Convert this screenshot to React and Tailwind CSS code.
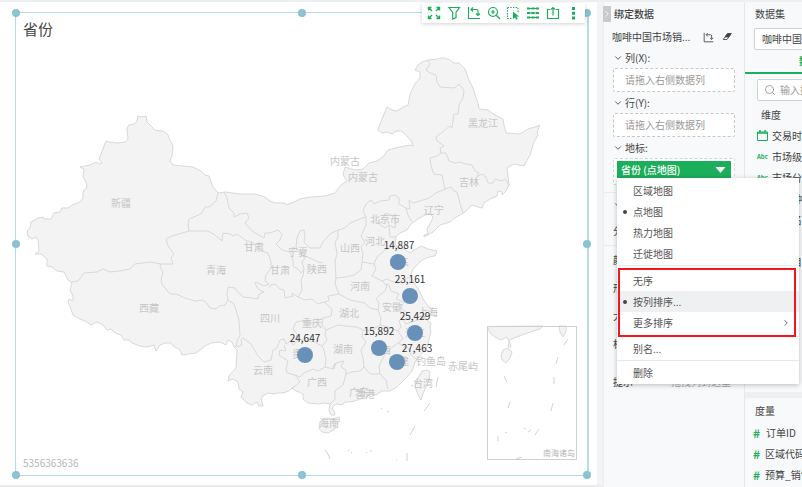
import { useState } from 'react';
import clsx from 'clsx';
import { ChevronDown, ChevronRight, Search } from 'lucide-react';

// Country outline, clockwise from the northern tip of Xinjiang
const OUTLINE =
  'M138 116L141 117 146 116 147 122 151 126 155 130 160 131 163 131 168 135 170 140 173 146 172 156 170 161 173 165 182 166 193 167 201 171 205 175 209 176 213 187 218 193 225 192 240 194 255 194 265 197 270 201 275 203 285 203 286 205 294 202 300 199 310 197 325 196 335 193 341 185 347 181 343 175 345 167 351 169 357 170 363 169 369 163 377 161 383 157 388 150 400 147 410 145 413 146 412 142 407 136 401 131 396 131 392 134 387 132 382 133 378 130 382 119 387 107 392 110 397 111 403 107 408 105 410 94 415 84 420 78 420 72 415 70 418 65 422 62 428 60 438 59 440 58 445 58 450 60 454 63 459 63 465 69 469 80 473 88 475 95 478 103 479 109 488 110 495 115 503 119 504 125 506 133 520 134 528 129 535 127 540 125 537 132 538 135 534 142 530 155 524 166 514 164 507 168 508 176 509 185 506 191 502 195 502 192 498 191 497 196 490 199 484 203 482 208 478 207 472 205 465 212 460 215 456 217 450 222 440 225 433 232 428 235 424 237 424 235 428 234 427 229 431 222 433 217 430 214 425 215 418 219 411 224 407 230 400 233 396 237 395 244 398 248 404 249 410 253 416 249 421 246 428 249 437 251 435 256 429 257 424 259 420 262 413 269 411 275 414 283 420 292 423 299 428 306 432 309 431 315 424 318 431 323 430 328 431 332 429 339 428 345 424 351 420 356 415 362 412 371 407 377 402 382 397 387 390 391 382 391 376 395 371 393 366 398 360 399 355 401 349 402 345 402 342 405 336 404 332 408 334 411 335 415 331 415 329 410 330 404 325 403 318 404 308 403 303 399 303 394 299 392 296 391 292 388 289 391 283 393 278 393 273 394 268 393 263 396 261 399 263 406 259 406 257 402 252 405 247 403 243 399 241 397 243 392 239 389 238 382 233 379 228 381 229 376 236 368 237 350 234 347 232 342 228 340 226 345 220 342 211 343 205 346 196 353 182 355 180 350 173 346 171 343 165 343 160 345 156 351 154 345 147 347 140 346 132 343 129 340 124 340 121 335 115 333 111 329 107 330 103 325 97 322 91 325 85 321 80 319 73 315 71 309 68 302 69 299 73 301 73 296 70 290 72 283 68 280 64 272 57 271 52 267 47 266 47 259 41 254 35 254 39 251 38 240 36 237 32 239 28 236 27 231 30 228 31 222 38 218 43 217 44 219 51 219 54 213 60 212 62 208 68 208 72 205 80 202 83 198 83 192 87 187 86 182 83 177 84 169 80 167 90 165 96 162 100 164 102 163 99 159 106 141 109 142 117 143 125 142 128 139 127 128 129 125 134 124 137 121Z';

const BORDERS = [
  // Xinjiang, Gansu, Qinghai, Tibet
  'M218 193L216 201 209 207 205 207 201 214 189 219 188 225 189 231 172 236 166 239 168 246 174 254 171 258 173 264 161 264 150 262 135 264 130 269 120 271 110 272 103 269 97 272 84 273 78 281 71 282',
  'M189 231L201 231 208 231 215 235 222 241 223 233 230 234 233 236 237 234 245 240 252 242 258 248 262 251 268 253 271 262 271 268 266 275 265 281 269 284 264 286 256 282 255 283 258 289 264 292 259 294 258 299 252 298 243 297 237 291 235 288 228 287 227 294 228 300 225 305 219 306 216 309 210 308 206 302 202 300 195 301 185 298 176 294 170 294 162 284 161 280 163 272 160 267 161 264',
  'M228 300L234 304 236 310 239 320 240 335 237 341 236 347 242 345 241 340 243 338 250 343 254 349 258 356 264 362 271 360 273 350 277 348 280 340 284 339 286 344 291 341 293 345 298 340',
  // Inner Mongolia south side
  'M224 192L227 198 229 208 234 213 234 217 240 214 247 213 249 218 245 223 252 231 257 234 264 238 265 233 270 233 278 230 282 234 280 240 276 244 282 250 290 252 293 260 293 266 298 269 301 273 304 269 302 262 305 258 301 255 296 247 297 238 300 231 304 230 305 236 304 242 310 248 320 248 323 242 330 234 338 230',
  'M290 252L297 247M301 255L310 258 318 262 323 263M304 269L303 276 301 280 302 290 298 297 292 293 293 296 285 298 284 290 280 289 275 284 271 285 269 287',
  'M338 230L345 228 350 223 360 219 366 217 363 211 366 204 371 200 374 204 380 201 389 200 390 196 395 195 399 198 399 204 406 208 410 209 409 200 413 203 420 201 429 198 436 193 445 189',
  'M445 189L442 175 434 174 431 166 430 158 437 156 441 153 440 148 444 146 440 143 437 141 436 137 450 126 452 128 454 114 458 114 459 105 463 98 464 90 459 84 455 88 440 87 437 82 436 75 430 73 426 70 430 64 427 60',
  'M441 153L446 153 449 161 455 163 460 162 466 164 472 165 475 171 479 173 477 177 482 174 486 177 488 183 493 183 495 179 501 181 505 179 509 185M445 189L451 187 454 191 457 192 461 207 463 213',
  // Hebei, Beijing, Tianjin, Shanxi, Shandong
  'M406 208L408 215 412 222M378 220L382 219 386 213 391 215 396 220 395 228 389 225 385 228 379 224ZM389 226L390 237 396 237',
  'M366 217L366 225 361 236 365 242 361 247 363 253 362 262 374 264 377 257 385 250 395 245M338 230L338 237 335 243 337 253 335 262 336 278 345 277 354 275 361 270 362 262',
  'M374 264L376 269 372 276 382 281 387 279 391 281 398 283 404 279 411 277',
  // Henan, Hubei, Anhui, Jiangsu, Shaanxi
  'M336 278L335 284 339 294 350 300 365 303 370 308 378 310 381 318 380 325 370 331 363 330 357 327 345 326 338 325 326 330 322 325 323 318',
  'M339 294L328 296 329 301 324 302 332 309 331 316 323 318 314 323 307 324 302 321 296 322 293 329 297 334 296 339 304 340 315 342 322 346 327 340 325 335 326 330M298 297L305 300 312 299 318 304 324 302',
  'M378 310L379 303 376 299 381 294 385 291 387 286 382 281M385 284L389 285 391 291 399 294 396 299 404 302 401 308 407 313 402 318 406 324 415 321 424 318M402 318L399 321 401 327 398 331 391 328 380 325',
  // Jiangxi, Zhejiang, Fujian, Hunan, Guangdong, Guangxi, Guizhou, Yunnan
  'M363 330L362 337 366 342 361 350 363 358 364 367 370 374 380 374 379 366 384 356 390 349 398 343 403 339 398 331M398 343L408 348 411 355 417 360M380 374L386 380 388 389',
  'M364 367L360 371 352 372 346 374 346 370 341 367 344 361 336 363 334 369 325 367 326 360 324 350 322 346M325 367L318 371 313 369 304 373 300 377 295 375 287 373 286 369 288 361 279 355 280 350 286 351 284 345M346 374L343 385 335 391 335 399 330 404M295 375L300 382 295 386 292 388',
].join('');

const HAINAN = 'M320 422L325 418 332 419 339 417 340 421 336 424 335 429 328 433 322 432 319 429Z';
const TAIWAN = 'M415 386L418 378 422 371 427 370 430 372 429 380 424 391 421 400 418 395Z';
const SEA_DASHES =
  'M438 377L436 387M430 403L424 411M415 426L410 435M407 453V461M325 450L328 454 330 459M381 408L382 409M387 411L389 412M348 450L349 451M351 452L352 453M366 452L367 453M370 451L372 451M396 460L397 460M335 363L333 368M413 385L411 386';

const REGION_LABELS = [
  ['新疆', 121, 203], ['甘肃', 254, 247], ['甘肃', 280, 270], ['青海', 216, 270], ['西藏', 149, 308],
  ['四川', 270, 318], ['重庆', 312, 323], ['云南', 263, 370], ['贵州', 302, 354], ['广西', 317, 382],
  ['宁夏', 298, 252], ['陕西', 317, 269], ['山西', 350, 248], ['河北', 375, 241], ['北京市', 385, 219],
  ['辽宁', 434, 210], ['吉林', 469, 182], ['黑龙江', 483, 123], ['内蒙古', 345, 161],
  ['内蒙古', 363, 177], ['河南', 360, 286], ['湖北', 349, 313], ['湖南', 343, 349], ['安徽', 392, 307],
  ['上海', 428, 312], ['山东', 399, 262], ['浙江', 415, 333], ['江西', 381, 350], ['福建', 399, 361],
  ['广东', 359, 392], ['香港', 365, 394], ['海南', 329, 423], ['台湾', 423, 383], ['钓鱼岛', 431, 361],
  ['赤尾屿', 463, 366],
];

const POINTS = [
  { value: '14,887', x: 398, y: 262, lx: 399, ly: 245 },
  { value: '23,161', x: 410, y: 296, lx: 410, ly: 279 },
  { value: '25,429', x: 415, y: 333, lx: 415, ly: 316 },
  { value: '15,892', x: 379, y: 348, lx: 379, ly: 331 },
  { value: '27,463', x: 397, y: 362, lx: 417, ly: 348 },
  { value: '24,647', x: 305, y: 355, lx: 305, ly: 338 },
];

const HANDLES = [
  '-left-1 -top-1', 'left-1/2 -top-1 -translate-x-1/2', '-right-1 -top-1',
  '-left-1 top-1/2 -translate-y-1/2', '-right-1 top-1/2 -translate-y-1/2',
  '-left-1 -bottom-1', 'left-1/2 -bottom-1 -translate-x-1/2', '-right-1 -bottom-1',
];

const TOOLS = [
  { name: '全屏', icon: <path d="M1.500 4.500v-3h3M1.500 1.500L5 5M9.500 1.500h3v3M12.500 1.500L9 5M1.500 9.500v3h3M1.500 12.500L5 9M12.500 9.500v3h-3M12.500 12.500L9 9" strokeWidth="1.400" /> },
  { name: '筛选', icon: <path d="M2 1.500h10.500L9 6.500v5L5.700 13V6.500z" /> },
  { name: '交换行列', icon: <path d="M1.500 1v11.500H13M4 3.500h5.500a1.500 1.500 0 0 1 1.500 1.500v4M6 1.500L4 3.500l2 2M9 7.500l2 2 2-2" /> },
  { name: '放大', icon: <path d="M10.500 6a4.500 4.500 0 1 1-9 0a4.500 4.500 0 0 1 9 0zM9.500 9.500L13 13M6 4v4M4 6h4" /> },
  { name: '框选', icon: <><path d="M1.500 1.500h10.500v5M1.500 1.500v11h5" strokeDasharray="1.500 1.200" /><path d="M7 5.500l6 5-2.500.300 1.200 2.200-1.500.700-1.100-2.200L7 13z" fill="currentColor" stroke="none" /></> },
  { name: '数据', icon: <><path d="M1 2.500h12M1 7h12M1 11.500h12" /><path d="M1 2.500h12M1 7h12M1 11.500h12" strokeWidth="2" strokeDasharray="3 1.500" /></> },
  { name: '导出', icon: <path d="M4 3.500H1.500v9h11v-9H10M7 9.500V1.500M4.800 3.700L7 1.500l2.200 2.200" /> },
  { name: '更多', icon: <path d="M6 1h3v3H6zM6 5.700h3v3H6zM6 10.400h3v3H6z" fill="currentColor" stroke="none" /> },
];

const MENU = [
  ['区域地图', '点地图', '热力地图', '迁徙地图'],
  ['无序', '按列排序...', '更多排序'],
  ['别名...'],
  ['删除'],
];

const DIMENSIONS = ['交易时间', '市场级别', '市场分类', '产品种类', '产品名称', '省份', '市场目录'];
const MEASURES = ['订单ID', '区域代码', '预算_销售额'];

function Toolbar() {
  return (
    <div className="absolute -top-[10px] right-[2px] z-10 flex h-5 w-[163px] items-center justify-between bg-white px-[5px] text-[#1baf5b] shadow-[0_1px_4px_rgba(0,0,0,0.18)]">
      {TOOLS.map((tool) => (
        <button key={tool.name} type="button" aria-label={tool.name}>
          <svg viewBox="0 0 14 14" className="size-[14px]" fill="none" stroke="currentColor" strokeWidth="1.200">
            {tool.icon}
          </svg>
        </button>
      ))}
    </div>
  );
}

function ChinaMap() {
  return (
    <svg viewBox="16 13 571 462" className="absolute inset-0 size-full" fill="none">
      <g fill="#f3f3f3" stroke="#d9d9d9" strokeLinejoin="round">
        <path d={OUTLINE} />
        <path d={HAINAN} />
        <path d={TAIWAN} />
      </g>
      <path d={BORDERS} stroke="#d9d9d9" strokeLinejoin="round" />
      <path d={SEA_DASHES} stroke="#d3d3d3" />

      {/* South China Sea inset */}
      <path d="M487.500 326.500L490 333 495 337 501 340 507 337 509 342 508 347 511 347 509 340 514 338 522 335 533 331 540 329 543 326ZM501 355L503 350 508 348 512 352 510 358 506 363 502 360ZM559 326L560 332 563 337 566 331 566 326Z" fill="#f3f3f3" stroke="#d9d9d9" />
      <path d="M568 339L564 345M558 357L556 364M554 377V384M553 403L551 411M504 376L507 382M510 402L508 408M498 436V441M505 433L507 432M524 428L526 429M528 432L531 430M539 429L535 435M516 459L522 457M542 317" stroke="#d3d3d3" />
      <rect x="487.500" y="326.500" width="89" height="133" stroke="#d0d0d0" />
      <text x="575" y="456" textAnchor="end" fontSize="8" fill="#b5b5b5">南海诸岛</text>

      <g fontSize="10" fill="#c6c6c6" textAnchor="middle">
        {REGION_LABELS.map(([name, x, y]) => (
          <text key={`${name}-${x}`} x={x} y={y + 4}>{name}</text>
        ))}
      </g>
      <g fontSize="10" fill="#333" textAnchor="middle">
        {POINTS.map((p) => (
          <g key={p.value}>
            <circle cx={p.x} cy={p.y} r="8" fill="#6990b9" />
            <text x={p.lx} y={p.ly + 4}>{p.value}</text>
          </g>
        ))}
      </g>
    </svg>
  );
}

function ChartPanel() {
  return (
    <main className="flex min-w-0 flex-1 bg-white pt-[10px] pr-2 pb-[9px] pl-[15px]">
      <section className="relative flex flex-1 flex-col justify-between border border-r-2 border-[#b5dbe5] px-[7px] py-[6px]">
        <ChinaMap />
        <h1 className="relative text-[15px] leading-5 text-[#444]">省份</h1>
        <p className="relative text-[10px] leading-3 text-[#b8b8b8]">5356363636</p>
        {HANDLES.map((place) => (
          <span key={place} className={clsx('absolute size-2 rounded-full bg-[#8bc3d3]', place)} />
        ))}
        <Toolbar />
      </section>
    </main>
  );
}

function ContextMenu({ selected, onSelect }) {
  return (
    <div role="menu" className="absolute top-full left-0 z-20 w-[182px] bg-white pt-px text-[#555] shadow-[0_1px_5px_rgba(0,0,0,0.25)]">
      {MENU.map((items, i) => (
        <div key={items[0]} className={clsx(i > 0 && 'border-t border-[#e8e8e8]', i === 1 ? 'pt-1 pb-[3px]' : 'py-px')}>
          {items.map((item) => (
            <button
              key={item}
              type="button"
              role="menuitem"
              onClick={() => onSelect(item)}
              className={clsx('flex h-[21px] w-full items-center pr-2', item === '按列排序...' && 'bg-[#eff0f1]')}
            >
              <span className="flex w-4 justify-center">
                {(item === selected || item === '按列排序...') && <span className="size-1 rounded-full bg-[#444]" />}
              </span>
              <span className="flex-1 text-left">{item}</span>
              {item === '更多排序' && <ChevronRight className="size-[10px]" strokeWidth={2} />}
            </button>
          ))}
        </div>
      ))}
      <div className="pointer-events-none absolute top-[90px] right-[3px] left-px h-[69px] border-2 border-[#f5151d]" />
    </div>
  );
}

function DropField({ label, children }) {
  return (
    <div>
      <h3 className="flex h-5 items-center gap-[2px]">
        <ChevronDown className="size-[10px]" /> {label}
      </h3>
      {children}
    </div>
  );
}

function DropZone() {
  return (
    <div className="mb-px h-6 rounded-[2px] border border-dashed border-[#c8c8c8] bg-white pl-[11px] leading-[22px] text-[#999]">
      请拖入右侧数据列
    </div>
  );
}

function BindPanel() {
  const [selected, setSelected] = useState('点地图');

  return (
    <aside className="relative z-10 w-[141px] shrink-0 border-l border-[#eceef0] bg-[#f7f9fa]">
      <button type="button" aria-label="收起" className="absolute top-1 -left-px flex h-4 w-2 items-center justify-center bg-[#c9cacb] text-white">
        <ChevronRight className="size-[10px] shrink-0" />
      </button>
      <h2 className="pl-[10px] leading-6 font-medium">绑定数据</h2>
      <div className="flex h-[22px] items-center gap-2 pr-3 pl-2">
        <span className="flex-1 whitespace-nowrap">咖啡中国市场销...</span>
        <button type="button" aria-label="交换行列">
          <svg viewBox="0 0 14 14" className="size-[11px]" fill="none" stroke="#555" strokeWidth="1.200">
            {TOOLS[2].icon}
          </svg>
        </button>
        <button type="button" aria-label="清空">
          <svg viewBox="0 0 12 12" className="size-[10px]" fill="none" stroke="#444">
            <path d="M6.500 2h4.500L6 9H1.500z" />
            <path d="M6.500 2h4.500L8.200 6H3.700z" fill="#444" />
          </svg>
        </button>
      </div>
      <div className="px-[9px]">
        <DropField label="列(X):"><DropZone /></DropField>
        <DropField label="行(Y):"><DropZone /></DropField>
        <DropField label="地标:">
          <div className="rounded-[2px] border border-dashed border-[#d5d5d5] bg-white py-[2px] pr-[3px] pl-[3px]">
            <div className="relative">
              <button type="button" aria-haspopup="menu" className="flex h-[17px] w-full items-center justify-between bg-[#1baf5b] px-1 font-medium text-white">
                省份 (点地图)
                <svg viewBox="0 0 10 6" className="mr-px h-[6px] w-[11px]"><path d="M0 0h10L5 6z" fill="white" /></svg>
              </button>
              <ContextMenu selected={selected} onSelect={setSelected} />
            </div>
            <div className="h-1" />
          </div>
        </DropField>
      </div>

      <div className="mt-[7px] border-y border-[#eaecee] px-[9px]">
        <h3 className="flex h-6 items-center gap-[2px]"><ChevronDown className="size-[10px]" /> 标记</h3>
        <p className="flex h-7 items-center">分组</p>
      </div>
      <dl className="px-[9px]">
        {['颜色', '形状', '大小', '标签', '提示'].map((name) => (
          <div key={name} className="flex h-7 items-center justify-between pr-1 last:h-12">
            <dt>{name}</dt>
            <dd className="text-[#aaa]">拖拽列到这里</dd>
          </div>
        ))}
      </dl>
    </aside>
  );
}

function FieldIcon({ index }) {
  if (index > 0) {
    return <span className="w-[11px] shrink-0 text-[6px] font-bold text-[#1baf5b]">Abc</span>;
  }
  return (
    <svg viewBox="0 0 11 11" className="size-[11px] shrink-0" fill="none" stroke="#1baf5b">
      <path d="M.500 2h10v8.500H.500z" />
      <path d="M.500 3h10M3 0v2M8 0v2" strokeWidth="1.500" />
    </svg>
  );
}

function DataPanel() {
  return (
    <aside className="flex w-[58px] shrink-0 flex-col overflow-hidden border-l border-[#e6e8ea] bg-[#f7f9fa] whitespace-nowrap">
      <label htmlFor="dataset" className="pl-[10px] leading-6">数据集</label>
      <select id="dataset" className="mt-[2px] ml-[9px] h-[22px] w-40 shrink-0 appearance-none rounded-[2px] border border-[#d0d3d6] bg-white pl-[7px]">
        <option>咖啡中国市场销售数据</option>
      </select>
      <div className="flex h-6 w-40 shrink-0 items-center border-b-2 border-[#1baf5b] pl-[54px] font-bold text-[#1baf5b]">
        <button type="button">数据</button>
      </div>
      <div className="mt-[5px] ml-3 flex h-[22px] w-36 shrink-0 items-center gap-1 rounded-[2px] border border-[#d0d3d6] bg-white pl-[6px]">
        <Search className="size-3 shrink-0 text-[#888]" strokeWidth={1.5} />
        <input aria-label="搜索" placeholder="输入搜索内容" className="w-24 outline-none placeholder:text-[#999]" />
      </div>
      <section className="flex h-[297px] shrink-0 flex-col border-b-[6px] border-[#edeff1] pt-1">
        <h3 className="pl-4 leading-5">维度</h3>
        <ul>
          {DIMENSIONS.map((name, i) => (
            <li key={name} className="flex h-[21px] items-center gap-1 pl-3">
              <FieldIcon index={i} /> {name}
            </li>
          ))}
        </ul>
      </section>
      <section className="pt-[3px]">
        <h3 className="pl-[10px] leading-5">度量</h3>
        <ul className="pt-px">
          {MEASURES.map((name) => (
            <li key={name} className="flex h-[21px] items-center gap-[5px] pl-2">
              <span className="w-2 text-[12px] font-bold text-[#1baf5b]">#</span> {name}
            </li>
          ))}
        </ul>
      </section>
    </aside>
  );
}

export default function App() {
  return (
    <div className="flex h-screen overflow-hidden border-t-2 border-[#eeeff0] bg-[#f2f3f5] font-['Noto_Sans_CJK_SC',sans-serif] text-[10px] leading-4 text-[#444]">
      <div className="flex min-w-0 flex-1 border-b-2 border-[#ececec] pr-[6px]">
        <ChartPanel />
      </div>
      <BindPanel />
      <DataPanel />
    </div>
  );
}
